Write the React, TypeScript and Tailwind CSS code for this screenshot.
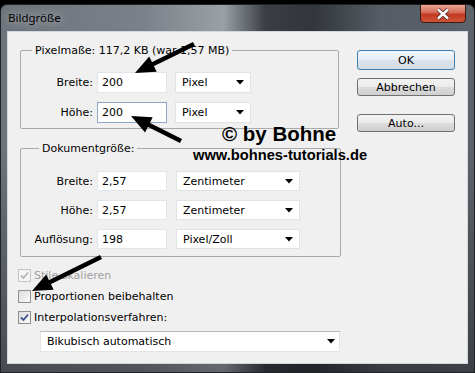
import React from 'react';

type Pt = { x1: number; y1: number; x2: number; y2: number };

// arrow from tail (x1,y1) to tip (x2,y2)
function Arrow({ x1, y1, x2, y2 }: Pt) {
  const dx = x2 - x1;
  const dy = y2 - y1;
  const len = Math.hypot(dx, dy);
  const ux = dx / len;
  const uy = dy / len;
  const hl = 20;
  const hw = 8.5;
  const bx = x2 - ux * hl;
  const by = y2 - uy * hl;
  const pts = `${x2},${y2} ${bx - uy * hw},${by + ux * hw} ${bx + uy * hw},${by - ux * hw}`;
  return (
    <g>
      <line x1={x1} y1={y1} x2={bx + ux * 2} y2={by + uy * 2} stroke="#000" strokeWidth={4.5} />
      <polygon points={pts} fill="#000" />
    </g>
  );
}

function Caret() {
  return (
    <svg width="8" height="5" viewBox="0 0 8 5">
      <path d="M0 0H8L4 4.5Z" fill="#000" />
    </svg>
  );
}

function Select({ value, wide }: { value: string; wide?: boolean }) {
  return (
    <div
      className={`${wide ? 'w-[124px] ml-[9px] pr-[6px]' : 'w-[76px] ml-[8px] pr-[6px]'} h-full bg-white border border-[#e2e2e2] flex items-center justify-between pl-[6px]`}
    >
      <span>{value}</span>
      <Caret />
    </div>
  );
}

function Field({ label, value, unit, wide, focus }: { label: string; value: string; unit: string; wide?: boolean; focus?: boolean }) {
  return (
    <div className={`flex items-center ${wide ? 'h-[20px]' : 'h-[21px]'}`}>
      <span className="w-[72px] text-right">{label}</span>
      <div
        className={`ml-[4px] w-[70px] h-full bg-white border flex items-center pl-[4px] ${focus ? 'border-[#8fa8c8]' : 'border-[#e2e5e9]'}`}
      >
        {value}
      </div>
      <Select value={unit} wide={wide} />
    </div>
  );
}

function Check({ on, disabled }: { on?: boolean; disabled?: boolean }) {
  return (
    <div
      className={`w-[13px] h-[13px] border flex items-center justify-center ${disabled ? 'border-[#c4c4c4] bg-[#f4f4f4]' : 'border-[#8e8f8f] bg-[linear-gradient(135deg,#dcdcdc,#fbfbfb)]'}`}
    >
      {on && (
        <svg width="9" height="9" viewBox="0 0 9 9">
          <path d="M1 4.5L3.5 7L8 1.5" fill="none" stroke={disabled ? '#b5b5b5' : '#3d4f8c'} strokeWidth="1.8" />
        </svg>
      )}
    </div>
  );
}

function Button({ label, primary, h }: { label: string; primary?: boolean; h: string }) {
  return (
    <div
      className={`${h} w-[98px] rounded-[3px] border flex items-center justify-center ${
        primary
          ? 'border-[#3c7fb1] bg-[linear-gradient(to_bottom,#f1f6fa_0%,#e7eef4_50%,#dbe4ec_50%,#d3dde6_100%)]'
          : 'border-[#707070] bg-[linear-gradient(to_bottom,#f2f2f2_0%,#ebebeb_50%,#dddddd_50%,#cfcfcf_100%)]'
      }`}
    >
      {label}
    </div>
  );
}

export default function App() {
  return (
    <div className="relative w-[475px] h-[373px] bg-black overflow-hidden font-['DejaVu_Sans',sans-serif] text-[11px] leading-[13px] text-black">
      <div className="h-full pt-[4px]">
        <div className="h-full flex flex-col rounded-t-[7px] border border-[#1f2226] bg-[linear-gradient(to_bottom,rgba(0,0,0,0)_0%,rgba(0,0,0,0)_40%,rgba(0,0,0,0.35)_100%),linear-gradient(to_right,#6d737a_0%,#7b8188_30%,#9aa0a6_47%,#3a3e44_56%,#32363c_66%,#565c64_80%,#5d636b_100%)]">
          {/* title bar */}
          <div className="h-[26px] flex items-start justify-between pl-[7px] pr-[8px]">
            <span className="mt-[6px] font-['Noto_Sans',sans-serif] text-[11.5px] leading-[14px] [text-shadow:0_0_8px_rgba(255,255,255,0.7)]">
              Bildgröße
            </span>
            <div className="-mt-[1px] w-[46px] h-[19px] rounded-b-[4px] border border-[#3d1a14] bg-[linear-gradient(to_bottom,#e9a696_0%,#d56a55_45%,#c13a22_55%,#cf5439_100%)] flex items-center justify-center">
              <svg width="14" height="12" viewBox="0 0 14 12">
                <path d="M2 1.5L12 10.5M12 1.5L2 10.5" stroke="#4a2a24" strokeWidth="4" />
                <path d="M2 1.5L12 10.5M12 1.5L2 10.5" stroke="#fff" strokeWidth="2.4" />
              </svg>
            </div>
          </div>

          {/* client area */}
          <div className="flex-1 mx-[6px] mb-[8px] border border-[#d3d8de] bg-[#f0f0f0] flex">
            <div className="w-[340px] pl-[10px] flex flex-col">
              <fieldset className="ml-[2px] mt-[12px] w-[319px] border border-[#a9a9a9] rounded-[2px] pt-[15px] pb-[5px] flex flex-col gap-[9px]">
                <legend className="ml-[11px] px-[3px]">Pixelmaße: 117,2 KB (war 1,57 MB)</legend>
                <Field label="Breite:" value="200" unit="Pixel" />
                <Field label="Höhe:" value="200" unit="Pixel" focus />
              </fieldset>

              <fieldset className="ml-[2px] mt-[13px] w-[321px] border border-[#a9a9a9] rounded-[2px] pt-[16px] pb-[7px] flex flex-col gap-[9px]">
                <legend className="ml-[18px] px-[3px]">Dokumentgröße:</legend>
                <Field label="Breite:" value="2,57" unit="Zentimeter" wide />
                <Field label="Höhe:" value="2,57" unit="Zentimeter" wide />
                <Field label="Auflösung:" value="198" unit="Pixel/Zoll" wide />
              </fieldset>

              <div className="mt-[12px] flex flex-col gap-[8px]">
                <div className="h-[13px] flex items-center">
                  <Check on disabled />
                  <span className="ml-[3px] text-[#a0a0a0]">Stile skalieren</span>
                </div>
                <div className="h-[13px] flex items-center">
                  <Check />
                  <span className="ml-[3px]">Proportionen beibehalten</span>
                </div>
                <div className="h-[13px] flex items-center">
                  <Check on />
                  <span className="ml-[3px]">Interpolationsverfahren:</span>
                </div>
              </div>

              <div className="mt-[7px] ml-[22px] w-[300px] h-[21px] bg-white border border-[#e4e4e4] border-t-[#b9b9b9] flex items-center justify-between pl-[6px] pr-[4px]">
                <span>Bikubisch automatisch</span>
                <Caret />
              </div>
            </div>

            <div className="ml-auto mr-[12px] pt-[18px] flex flex-col">
              <Button label="OK" primary h="h-[20px]" />
              <div className="mt-[8px]">
                <Button label="Abbrechen" h="h-[18px]" />
              </div>
              <div className="mt-[18px]">
                <Button label="Auto..." h="h-[18px]" />
              </div>
            </div>
          </div>
        </div>
      </div>

      {/* watermark overlay */}
      <div className="absolute left-[222px] top-[124px] font-['Liberation_Sans',Arial,sans-serif] font-bold text-[20.5px] leading-none">
        © by Bohne
      </div>
      <div className="absolute left-[193px] top-[148px] font-['Liberation_Sans',Arial,sans-serif] font-bold text-[14.7px] leading-none">
        www.bohnes-tutorials.de
      </div>

      {/* arrows overlay */}
      <svg className="absolute inset-0 pointer-events-none" width="475" height="373">
        <Arrow x1={194} y1={44} x2={135} y2={73} />
        <Arrow x1={181} y1={141} x2={131} y2={116} />
        <Arrow x1={101} y1={257} x2={32} y2={291} />
      </svg>
    </div>
  );
}
